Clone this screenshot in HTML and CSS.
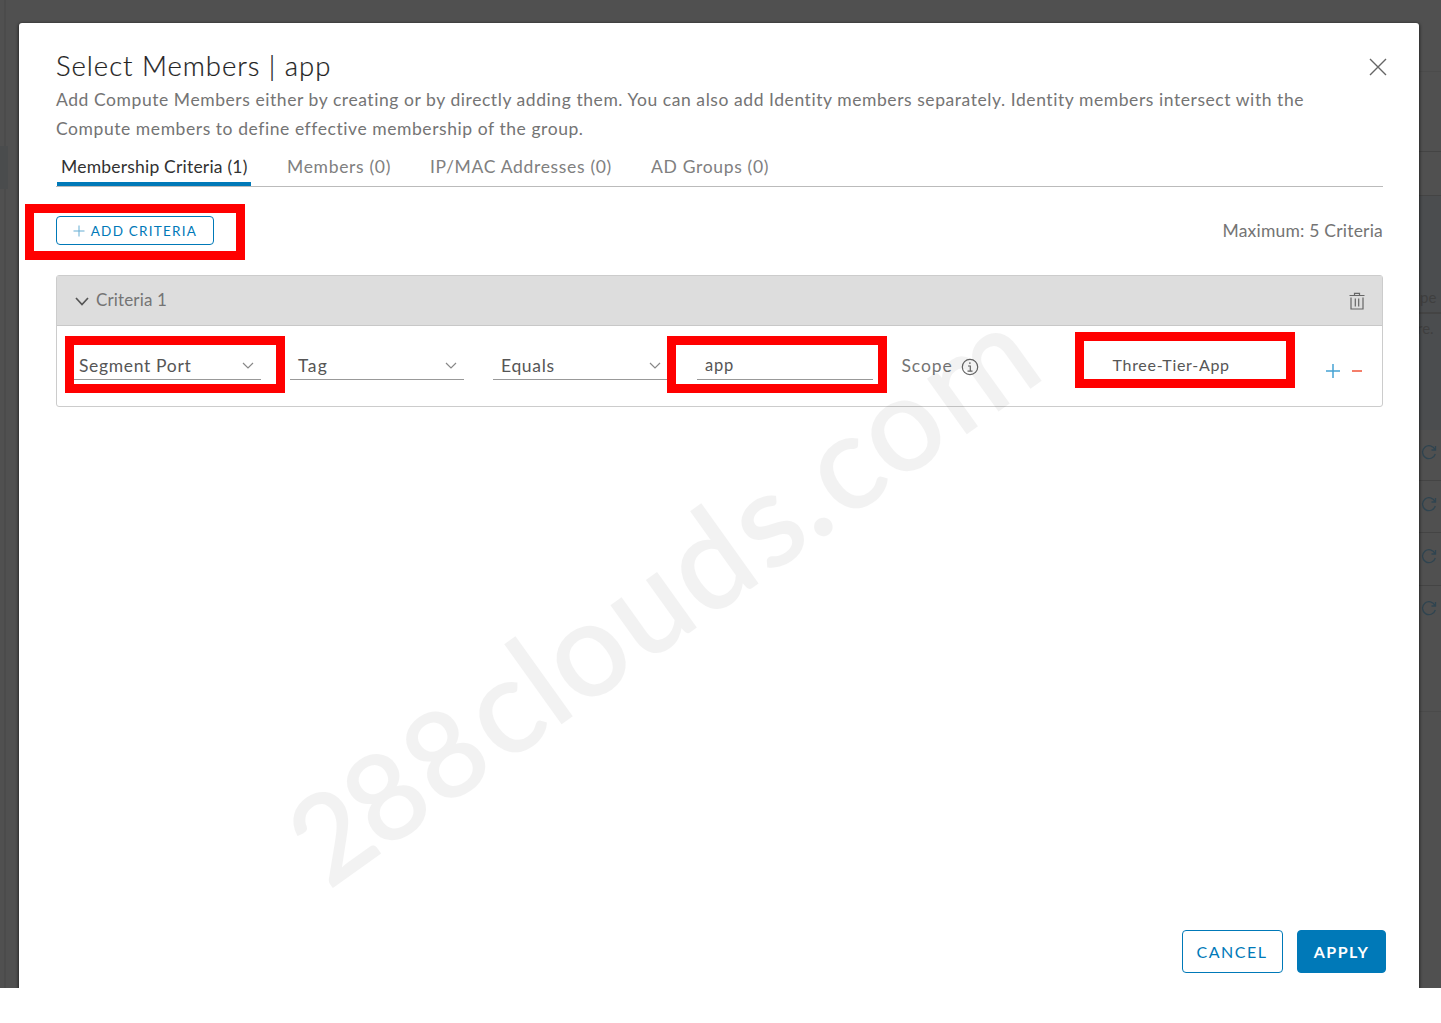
FILE: index.html
```html
<!DOCTYPE html>
<html lang="en">
<head>
<meta charset="utf-8">
<title>Select Members | app</title>
<link rel="stylesheet" href="styles.css">
</head>
<body>
<div class="screen">
  <div class="page-behind">
    <i class="edge"></i>
    <i class="nav-item"></i>
    <i class="band"></i>
    <i class="rule r1"></i><i class="rule r2"></i><i class="rule r3"></i><i class="rule r4"></i><i class="rule r5"></i><i class="rule r6"></i><i class="rule r7"></i><i class="rule r8"></i>
    <span class="ghost g1">pe</span>
    <span class="ghost g2">re.</span>
    <svg class="refresh f1" viewBox="0 0 16 16"><path d="M14 5.5A6.5 6.5 0 1 0 14.3 10M14.5 2v4h-4"/></svg>
    <svg class="refresh f2" viewBox="0 0 16 16"><path d="M14 5.5A6.5 6.5 0 1 0 14.3 10M14.5 2v4h-4"/></svg>
    <svg class="refresh f3" viewBox="0 0 16 16"><path d="M14 5.5A6.5 6.5 0 1 0 14.3 10M14.5 2v4h-4"/></svg>
    <svg class="refresh f4" viewBox="0 0 16 16"><path d="M14 5.5A6.5 6.5 0 1 0 14.3 10M14.5 2v4h-4"/></svg>
  </div>

  <main class="modal">
    <header class="modal-head">
      <h1>Select Members | app</h1>
      <svg class="close" viewBox="0 0 18 18"><path d="M1 1l16 16M17 1L1 17"/></svg>
    </header>
    <p class="intro"><span>Add Compute Members either by creating or by directly adding them. You can also add Identity members separately. Identity members intersect with the</span><br><span>Compute members to define effective membership of the group.</span></p>

    <nav class="tabs">
      <a class="tab active">Membership Criteria (1)</a>
      <a class="tab">Members (0)</a>
      <a class="tab">IP/MAC Addresses (0)</a>
      <a class="tab">AD Groups (0)</a>
    </nav>

    <div class="toolbar">
      <button class="btn add"><svg viewBox="0 0 12 12"><path d="M6 0.5v11M0.5 6h11"/></svg><span>ADD CRITERIA</span></button>
      <span class="maximum">Maximum: 5 Criteria</span>
    </div>

    <section class="card">
      <div class="card-head">
        <svg class="caret" viewBox="0 0 14 9"><path d="M1 1l6 6.5L13 1"/></svg>
        <span class="card-title">Criteria 1</span>
        <svg class="trash" viewBox="0 0 16 18"><path d="M0.5 3.500h15M5.500 3V1.300h5V3M2 5.500V17h12V5.500M6.300 6.500v8M9.700 6.500v8"/></svg>
      </div>
      <div class="criteria">
        <div class="field f-member"><span>Segment Port</span><svg viewBox="0 0 12 8"><path d="M1 1l5 5 5-5"/></svg></div>
        <div class="field f-key"><span>Tag</span><svg viewBox="0 0 12 8"><path d="M1 1l5 5 5-5"/></svg></div>
        <div class="field f-op"><span>Equals</span><svg viewBox="0 0 12 8"><path d="M1 1l5 5 5-5"/></svg></div>
        <div class="field f-value"><span>app</span></div>
        <div class="scope"><span>Scope</span><svg viewBox="0 0 18 18"><circle cx="9" cy="9" r="7.700"/><path d="M7 8h2.300v5M6.500 13.200h5M8.900 4.300v1.700"/></svg></div>
        <div class="scope-value"><span>Three-Tier-App</span></div>
        <div class="row-actions">
          <svg class="plus" viewBox="0 0 14 14"><path d="M7 0v14M0 7h14"/></svg>
          <svg class="minus" viewBox="0 0 10 14"><path d="M0 7h10"/></svg>
        </div>
      </div>
    </section>

    <footer class="modal-foot">
      <button class="btn cancel"><span>CANCEL</span></button>
      <button class="btn apply"><span>APPLY</span></button>
    </footer>
  </main>

  <svg class="watermark" viewBox="0 0 1441 988"><text transform="translate(330 889) rotate(-35.600)" x="33 99 172 244 291 345 422 498 568 612 663 732 828">288<tspan class="letters">clouds.com</tspan></text></svg>
  <div class="mark m1"></div>
  <div class="mark m2"></div>
  <div class="mark m3"></div>
  <div class="mark m4"></div>
</div>
</body>
</html>
```
FILE: styles.css
```css
* { box-sizing: border-box; }
body { margin: 0; background: #fff; font: 17.500px/29px Lato, "Open Sans", sans-serif; color: #747474; }
svg { display: block; flex: none; fill: none; stroke: currentColor; }
span { white-space: nowrap; }

.screen { position: relative; height: 988px; padding: 23px 22px 0 19px; background: #505050; overflow: hidden; }

/* Dimmed page under the dialog */
.page-behind { position: absolute; inset: 0; }
.page-behind > * { position: absolute; }
.edge { left: 4px; top: 0; width: 2px; height: 988px; background: #4b4b4b; }
.nav-item { left: 0; top: 146px; width: 8px; height: 43px; background: #4a4c4d; }
.band { left: 1419px; right: 0; top: 196px; height: 234px; background: #4b4d4f; }
.rule { left: 1419px; right: 0; height: 1px; background: #444; }
.r1 { top: 71px; background: #4b4b4b; } .r2 { top: 151px; } .r3 { top: 195px; } .r4 { top: 312px; height: 2px; }
.r5 { top: 480px; } .r6 { top: 532px; } .r7 { top: 585px; } .r8 { top: 711px; background: #4a4a4a; }
.ghost { font-size: 15px; line-height: 20px; color: #3f3f3f; }
.g1 { left: 1420px; top: 287px; }
.g2 { left: 1417px; top: 318px; }
.refresh { left: 1421px; width: 16px; height: 16px; color: #2f4450; stroke-width: 1.300; }
.f1 { top: 444px; } .f2 { top: 496px; } .f3 { top: 548px; } .f4 { top: 600px; }

.modal { position: relative; display: flex; flex-direction: column; height: 965px; padding: 27px 36px 15px 37px; background: #fff; border-radius: 3px 3px 0 0; box-shadow: 0 1px 3px 1px rgba(0,0,0,.5); }
.modal-head { display: flex; justify-content: space-between; align-items: center; height: 32px; margin-right: -3.500px; }
h1 { margin: 0; font-size: 27.500px; font-weight: 300; line-height: 32px; color: #222; letter-spacing: .960px; -webkit-text-stroke: .200px #222; }
.close { width: 18px; height: 18px; margin-top: 2px; color: #666; stroke-width: 1.400; }
.intro { margin: 3px 0 0; height: 58px; letter-spacing: .565px; }

.tabs { display: flex; height: 44px; border-bottom: 1px solid #bbb; letter-spacing: .680px; color: #808080; }
.tab { height: 43px; padding: 9px 4px 0; margin-right: 31px; white-space: nowrap; }
.tab.active { width: 194px; margin-left: 1px; margin-right: 32px; color: #313131; border-bottom: 4px solid #0079b8; letter-spacing: .210px; }

.toolbar { display: flex; justify-content: space-between; align-items: center; height: 29px; margin-top: 29px; }
.maximum { letter-spacing: .210px; }
.btn { display: flex; align-items: center; justify-content: center; padding: 0; background: #fff; border: 1.500px solid #0079b8; border-radius: 4px; color: #0079b8; font-family: inherit; }
.add { width: 158px; height: 29px; gap: 6px; font-size: 13.500px; letter-spacing: 1.250px; }
.add svg { width: 12px; height: 12px; opacity: .6; }

.card { height: 132px; margin-top: 30px; border: 1px solid #ccc; border-radius: 3px; }
.card-head { display: flex; align-items: center; height: 50px; padding: 0 17px 1px 17.500px; background: #ddd; border-bottom: 1px solid #c8c8c8; }
.caret { width: 14px; height: 9px; margin-top: 2px; color: #555; stroke-width: 1.700; }
.card-title { margin: -1px 0 0 7.500px; font-size: 17px; letter-spacing: .150px; }
.trash { width: 16px; height: 18px; margin: 2px 0 0 auto; color: #666; stroke-width: 1.200; }
.criteria { display: flex; height: 80px; padding: 25px 18px 0 16px; color: #565656; }
.field { display: flex; justify-content: space-between; align-items: center; height: 29px; padding: 0 8px; border-bottom: 1px solid #999; letter-spacing: .660px; }
.field svg { width: 12px; height: 8px; margin-top: 1px; color: #888; stroke-width: 1.200; }
.f-member { width: 188px; padding: 0 7px 0 6px; }
.f-key { width: 174px; margin-left: 29px; padding-right: 7px; letter-spacing: 1.300px; }
.f-op { width: 174px; margin-left: 29px; padding-right: 6px; }
.f-value { width: 176px; margin-left: 30px; font-size: 16.500px; letter-spacing: .800px; }
.scope { display: flex; align-items: center; gap: 8px; height: 29px; width: 175px; margin-left: 28.500px; color: #747474; letter-spacing: .900px; }
.scope svg { width: 18px; height: 18px; margin-top: 2px; color: #666; stroke-width: 1.200; }
.scope-value { width: 180px; padding-left: 36px; margin-top: -1px; font-size: 16px; letter-spacing: .700px; }
.row-actions { display: flex; align-items: center; gap: 12px; height: 14px; margin: 12.500px 0 0 auto; padding-right: 2px; }
.plus { width: 14px; height: 14px; color: #46a3d3; stroke-width: 1.500; }
.minus { width: 10px; height: 14px; color: #f3705a; stroke-width: 1.800; }

.modal-foot { display: flex; justify-content: flex-end; gap: 14.500px; margin: auto -3px 0 0; }
.modal-foot .btn { height: 43.500px; font-size: 16px; letter-spacing: 1.500px; }
.cancel { width: 101px; }
.btn.apply { width: 89px; background: #0079b8; color: #fff; font-weight: 700; }

.watermark { position: absolute; left: 0; top: 0; width: 1441px; height: 988px; }
.watermark text { font-size: 120px; text-anchor: middle; fill: #000; stroke: #000; stroke-width: 2px; opacity: .047; }
.watermark .letters { font-size: 131px; }

/* Highlight frames */
.mark { position: absolute; width: 220px; height: 57px; border: 9px solid #f00; }
.m1 { left: 25px; top: 204px; height: 56px; }
.m2 { left: 65px; top: 336px; }
.m3 { left: 667px; top: 336px; }
.m4 { left: 1075px; top: 332px; height: 56px; }
```
